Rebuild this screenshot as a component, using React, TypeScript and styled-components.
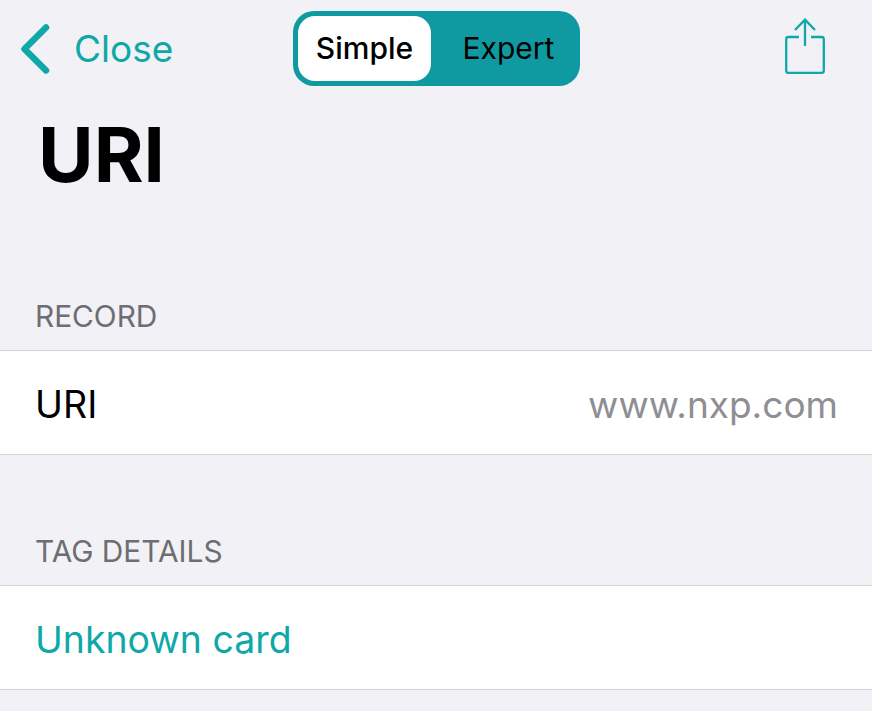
import React from "react";
import styled, { createGlobalStyle } from "styled-components";

const Global = createGlobalStyle`
  html, body { margin: 0; padding: 0; background: #f1f1f6; }
  body { font-family: Inter, "Liberation Sans", sans-serif; -webkit-font-smoothing: antialiased; }
`;

const Page = styled.div`
  width: 872px;
  height: 711px;
  overflow: hidden;
  background: #f1f1f6;
`;

const NavBar = styled.div`
  display: grid;
  grid-template-columns: 293px 287px 1fr;
  height: 86px;
  padding-top: 11px;
  box-sizing: border-box;
`;

const BackButton = styled.div`
  display: flex;
  align-items: center;
  height: 75px;
  padding-left: 20px;
  gap: 23px;
  color: #0ea8a8;
  font-size: 37px;
`;

const Segmented = styled.div`
  display: flex;
  height: 75px;
  box-sizing: border-box;
  padding: 5px;
  background: #0e9aa0;
  border-radius: 21px;
`;

const Segment = styled.div<{ $active?: boolean }>`
  display: flex;
  align-items: center;
  justify-content: center;
  flex: ${(p) => (p.$active ? "0 0 133px" : "1")};
  padding-left: ${(p) => (p.$active ? 0 : 11)}px;
  padding-bottom: 1px;
  border-radius: 17px;
  background: ${(p) => (p.$active ? "#ffffff" : "transparent")};
  color: #000;
  font-size: 30px;
  font-weight: ${(p) => (p.$active ? 500 : 400)};
`;

const ShareSlot = styled.div`
  display: flex;
  justify-content: flex-end;
  padding: 7px 47px 0 0;
  height: 58px;
  color: #0ea8a8;
`;

const Title = styled.h1`
  margin: 0;
  padding: 22px 0 0 38px;
  height: 119px;
  box-sizing: border-box;
  font-size: 76px;
  line-height: 92px;
  font-weight: 700;
  color: #000;
`;

const SectionHeader = styled.div<{ $top: number }>`
  margin-top: ${(p) => p.$top}px;
  padding-left: 35px;
  height: 46px;
  line-height: 24px;
  font-size: 29.8px;
  color: #6d6d72;
`;

const Row = styled.div`
  display: flex;
  align-items: center;
  justify-content: space-between;
  height: 105px;
  box-sizing: border-box;
  padding: 3px 34px 0 35px;
  background: #fff;
  border-top: 1px solid #d1d1d6;
  border-bottom: 1px solid #d1d1d6;
`;

const RowLabel = styled.span<{ $accent?: boolean }>`
  font-size: ${(p) => (p.$accent ? 37.4 : 37.6)}px;
  color: ${(p) => (p.$accent ? "#0ea8a8" : "#000")};
`;

const RowValue = styled.span`
  font-size: 37px;
  color: #8e8e93;
`;

export default function App() {
  return (
    <Page>
      <Global />
      <NavBar>
        <BackButton>
          <svg width="31" height="50" viewBox="0 0 31 50" fill="none">
            <path d="M26 3.5 L4.5 25 L26 46.5" stroke="currentColor" strokeWidth="6.5" strokeLinecap="round" strokeLinejoin="round" />
          </svg>
          <span>Close</span>
        </BackButton>
        <Segmented>
          <Segment $active>Simple</Segment>
          <Segment>Expert</Segment>
        </Segmented>
        <ShareSlot>
          <svg width="40" height="56" viewBox="0 0 40 56" fill="none" stroke="currentColor" strokeWidth="2.3">
            <path d="M14 19 H3.5 a2.3 2.3 0 0 0 -2.3 2.3 V52.7 a2.3 2.3 0 0 0 2.3 2.3 H36.5 a2.3 2.3 0 0 0 2.3 -2.3 V21.3 a2.3 2.3 0 0 0 -2.3 -2.3 H26" />
            <path d="M20 28 V2" />
            <path d="M10 12 L20 1.6 L30 12" />
          </svg>
        </ShareSlot>
      </NavBar>
      <Title>URI</Title>
      <SectionHeader $top={99}>RECORD</SectionHeader>
      <Row>
        <RowLabel>URI</RowLabel>
        <RowValue>www.nxp.com</RowValue>
      </Row>
      <SectionHeader $top={84}>TAG DETAILS</SectionHeader>
      <Row>
        <RowLabel $accent>Unknown card</RowLabel>
      </Row>
    </Page>
  );
}
